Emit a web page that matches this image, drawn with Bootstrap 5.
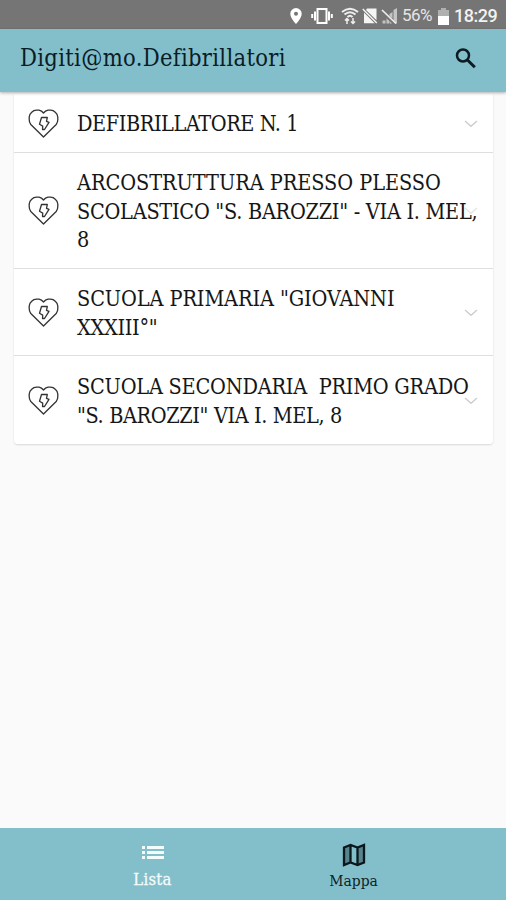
<!DOCTYPE html>
<html lang="it">
<head>
<meta charset="utf-8">
<meta name="viewport" content="width=device-width, initial-scale=1">
<title>Digiti@mo.Defibrillatori</title>
<link href="https://cdn.jsdelivr.net/npm/bootstrap@5.3.0/dist/css/bootstrap.min.css" rel="stylesheet">
<style>
body{font-family:"DejaVu Serif Condensed","DejaVu Serif",serif;font-stretch:condensed;background:#fafafa;color:#161616}
.statusbar{height:29px;background:#757575;color:#f2f2f2;font-family:Roboto,sans-serif;font-stretch:normal;padding:3px 10px 0 0}
.statusbar svg{flex:none}
.pct{font-size:17px;margin-left:4px;width:33px;letter-spacing:-.6px;color:#e6e6e6}
.clock{font-size:18px;font-weight:500;margin-left:5px;width:42px;letter-spacing:-.5px;line-height:24px;margin-top:-1px}
.appbar{height:63px;background:#83bfcb;padding:0 29px 3px 20px;box-shadow:0 1px 3px rgba(0,0,0,.3);z-index:2}
.apptitle{font-size:23.5px;letter-spacing:.32px;color:#0b1c26;line-height:30px;margin-top:-3px}
.devices{margin:2px 13px 0 14px;border-radius:0 0 4px 4px;box-shadow:0 1px 2px rgba(0,0,0,.14)}
.device{border:0;border-bottom:1px solid #dedede;padding:15px 0 14px 14px;background:#fff;color:#161616}
.device:last-child{border-bottom:0;padding-top:16px}
.device svg{flex:none}
.label{font-size:21.5px;line-height:28.65px;margin:1px 0 -1px 18px;white-space:pre}
.label span{display:block}
.chev{right:15px;top:50%;margin-top:-3px}
.tabs{height:72px;background:#83bfcb}
.tab{width:201px;font-size:15.5px;line-height:20px;color:#0e1f27;padding-top:15px}
.tab svg{margin-bottom:4px}
.tab.active{color:#f4fbfc;font-size:16.5px;padding-top:14px;-webkit-text-stroke:.3px #f4fbfc;letter-spacing:.3px}
.tab.active svg{margin-bottom:8px}
.l1{letter-spacing:-.43px}.l2{letter-spacing:-.05px}.l3{letter-spacing:-.27px}.l4{letter-spacing:-.1px}.l5{letter-spacing:-.3px}.l6{letter-spacing:-.23px}.l7{letter-spacing:-.38px}
</style>
</head>
<body>
<svg class="d-none">
<symbol id="heart" viewBox="0 0 30 29"><g fill="none" stroke="#333" stroke-linejoin="round"><path stroke-width="1.3" d="M15 28L2.300 15.500Q.7 13.500.7 10.500V8Q.9 5.200 3.200 3.300Q5.200 1.100 8 1.100H10.500Q13.200 1.600 15 4Q16.800 1.600 19.500 1.100H22Q24.800 1.100 26.800 3.300Q29.100 5.200 29.300 8V10.500Q29.300 13.500 27.700 15.500Z"/><path stroke-width="1.300" d="M13 8.500h5.800l-.8 3.800 2.500 1-4.500 7.200h-2l.2-3.400-3.200-1.800z"/></g></symbol>
<symbol id="chevron" viewBox="0 0 14 8"><path d="M1 1l6 5.300L13 1" fill="none" stroke="#cdcdcd" stroke-width="1.400"/></symbol>
</svg>
<div class="d-flex flex-column vh-100">
<div class="statusbar d-flex align-items-center justify-content-end">
<svg width="12" height="18" viewBox="0 0 12 18"><path fill="#fff" fill-rule="evenodd" d="M6 1a5.700 5.700 0 0 0-5.700 5.700C.3 11 6 17 6 17s5.700-6 5.700-10.300A5.700 5.700 0 0 0 6 1zm0 3.800a2 2 0 1 1 0 4 2 2 0 0 1 0-4z"/></svg>
<svg style="margin-left:9px" width="22" height="18" viewBox="0 0 22 18"><path fill="none" stroke="#fff" stroke-width="2" d="M6.500 2h9v14h-9zM4 4.500v9M18 4.500v9M1.200 7v4M20.800 7v4"/></svg>
<svg style="margin-left:8px" width="18" height="18" viewBox="0 0 18 18"><g fill="none" stroke="#eee" stroke-width="2"><path d="M1 5Q9-1.500 17 5M3.500 7.500Q9 3 14.500 7.500M6.500 10Q9 7.500 11.500 10"/><path d="M6 17v-5.500M4 13.500l2-2 2 2M12 11v5.500M10 14.500l2 2 2-2" stroke-width="1.500"/></g></svg>
<svg style="margin-left:3px" width="16" height="18" viewBox="0 0 16 18"><path fill="#f5f5f5" d="M5 1.500h9.500v11.700L4 3zM2 5.500l10.700 10.700H2zM.3 2.500l1-1 14 14-1 1z"/></svg>
<svg style="margin-left:3px" width="17" height="18" viewBox="0 0 17 18"><path fill="#c4c4c4" d="M12.500 3l3.500-2v15.500h-2L12.500 13zM8.500 7l3-2v6.500L8.500 9zM5.500 11.500l3 2.500v2.500h-3zM1.500 13.500h3v3h-3zM9 14.500l2 2H9z"/><path stroke="#eee" stroke-width="1.700" d="M1 3l14 13.500"/></svg>
<span class="pct">56%</span>
<svg style="margin-left:3px" width="11" height="17" viewBox="0 0 11 17"><path fill="#b0b0b0" d="M3 0h5v2h3v6H0V2h3z"/><path fill="#fff" d="M0 8h11v9H0z"/></svg>
<span class="clock">18:29</span>
</div>
<header class="appbar d-flex align-items-center justify-content-between position-relative">
<div class="apptitle text-nowrap">Digiti@mo.Defibrillatori</div>
<svg width="22" height="22" viewBox="0 0 22 22"><circle cx="8" cy="7.500" r="6" fill="none" stroke="#0b1c22" stroke-width="2.500"/><path d="M12.500 12l7.300 7.300" stroke="#0b1c22" stroke-width="3"/></svg>
</header>
<main class="flex-grow-1">
<div class="devices list-group list-group-flush">
<div class="device list-group-item d-flex align-items-center"><svg width="31" height="29"><use href="#heart"/></svg><div class="label"><span class="l1">DEFIBRILLATORE N. 1</span></div><svg class="chev position-absolute" width="14" height="8"><use href="#chevron"/></svg></div>
<div class="device list-group-item d-flex align-items-center"><svg width="31" height="29"><use href="#heart"/></svg><svg class="chev position-absolute opacity-50" width="14" height="8"><use href="#chevron"/></svg><div class="label position-relative"><span class="l2">ARCOSTRUTTURA PRESSO PLESSO</span><span class="l3">SCOLASTICO "S. BAROZZI" - VIA I. MEL,</span><span>8</span></div></div>
<div class="device list-group-item d-flex align-items-center"><svg width="31" height="29"><use href="#heart"/></svg><div class="label"><span class="l4">SCUOLA PRIMARIA "GIOVANNI</span><span class="l5">XXXIII°"</span></div><svg class="chev position-absolute" width="14" height="8"><use href="#chevron"/></svg></div>
<div class="device list-group-item d-flex align-items-center"><svg width="31" height="29"><use href="#heart"/></svg><div class="label"><span class="l6">SCUOLA SECONDARIA  PRIMO GRADO</span><span class="l7">"S. BAROZZI" VIA I. MEL, 8</span></div><svg class="chev position-absolute" width="14" height="8"><use href="#chevron"/></svg></div>
</div>
</main>
<nav class="tabs d-flex justify-content-center">
<div class="tab active d-flex flex-column align-items-center"><svg width="24" height="20" viewBox="0 0 24 20"><path fill="#f4fbfc" d="M1 4h3v3H1zM6 4h17v3H6zM1 9h3v3H1zM6 9h17v3H6zM1 14h3v3H1zM6 14h17v3H6z"/></svg>Lista</div>
<div class="tab d-flex flex-column align-items-center"><svg width="24" height="24" viewBox="0 0 24 24"><path fill="#0a171c" fill-opacity=".35" d="M2 4.500L8.500 2v17.500L2 22zM15.500 4.500L22 2v17.500L15.500 22z"/><path fill="none" stroke="#0a171c" stroke-width="2.300" d="M2 4.500L8.500 2l7 2.500L22 2v17.500L15.500 22l-7-2.500L2 22zM8.500 2v17.500M15.500 4.500V22"/></svg>Mappa</div>
</nav>
</div>
<script src="https://cdn.jsdelivr.net/npm/bootstrap@5.3.0/dist/js/bootstrap.bundle.min.js"></script>
</body>
</html>
